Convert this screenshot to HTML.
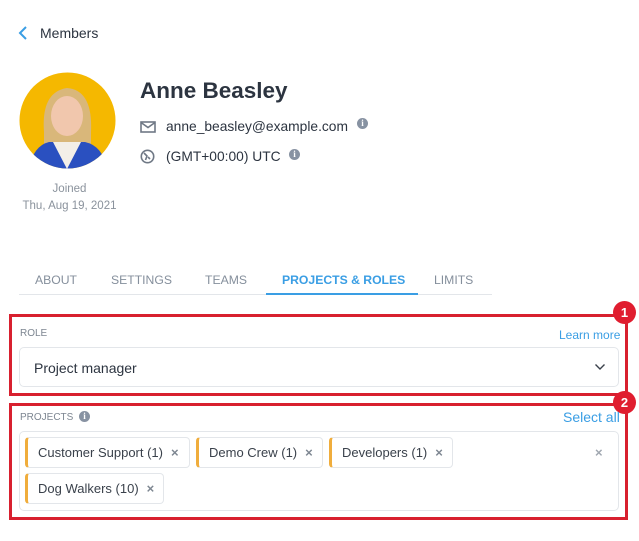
<!DOCTYPE html>
<html><head><meta charset="utf-8"><style>
*{box-sizing:border-box;margin:0;padding:0}
body{width:639px;height:541px;background:#fff;font-family:"Liberation Sans",sans-serif;color:#2c3440;position:relative;overflow:hidden}
.a{position:absolute;white-space:nowrap}
.info{position:absolute;width:11px;height:11px;border-radius:50%;background:#8792a2;color:#fff;font-size:9px;font-weight:bold;text-align:center;line-height:11px;font-family:"Liberation Serif",serif}
.tab{position:absolute;top:273px;font-size:12.2px;color:#858f9c}
.chip{position:absolute;height:31px;border:1px solid #e3e6ea;border-left:3px solid #f0ad3c;border-radius:4px;font-size:13px;color:#3a414b;line-height:29px;padding-left:10px}
.chip span{color:#7d8691;margin-left:8px;font-size:13px;font-weight:bold}
.badge{position:absolute;width:23px;height:23px;border-radius:50%;background:#e01d2f;color:#fff;font-size:13px;font-weight:bold;text-align:center;line-height:23px}
.rbox{position:absolute;border:3px solid #d8202f}
</style></head><body>
<svg class="a" style="left:17px;top:25px" width="12" height="16" viewBox="0 0 12 16"><path d="M9 2 L3 8 L9 14" fill="none" stroke="#3a9ee4" stroke-width="2"/></svg>
<div class="a" style="left:40px;top:25px;font-size:14px;color:#2c3440">Members</div>

<svg class="a" style="left:19px;top:72px" width="97" height="97" viewBox="0 0 97 97">
<defs><clipPath id="c"><circle cx="48.5" cy="48.5" r="48"/></clipPath></defs>
<g clip-path="url(#c)">
<rect width="97" height="97" fill="#f5b800"/>
<path d="M25 60 Q22 20 48 16 Q74 18 72 60 L72 80 L25 80Z" fill="#d9b77a"/>
<ellipse cx="48" cy="44" rx="16" ry="20" fill="#f1c7ad"/>
<path d="M10 97 Q14 74 30 70 L66 70 Q84 74 88 97Z" fill="#2a50c0"/>
<path d="M34 70 L48 97 L62 70Z" fill="#f3efe8"/>
</g></svg>
<div class="a" style="left:0;width:139px;top:181px;text-align:center;font-size:11.5px;color:#8a929c;line-height:17px">Joined<br>Thu, Aug 19, 2021</div>

<div class="a" style="left:140px;top:78px;font-size:22.5px;font-weight:bold;color:#2c3440">Anne Beasley</div>
<svg class="a" style="left:140px;top:121px" width="16" height="12" viewBox="0 0 16 12"><rect x="1" y="1" width="14" height="10" fill="none" stroke="#6f7885" stroke-width="1.6"/><path d="M1 1.5 L8 6.5 L15 1.5" fill="none" stroke="#6f7885" stroke-width="1.6"/></svg>
<div class="a" style="left:166px;top:119px;font-size:13.8px;color:#2c3440">anne_beasley@example.com</div>
<div class="info" style="left:357px;top:118px">i</div>
<svg class="a" style="left:140px;top:149px" width="15" height="15" viewBox="0 0 15 15"><circle cx="7.5" cy="7.5" r="6.2" fill="none" stroke="#6f7885" stroke-width="1.6"/><path d="M4 4 L7 7 L5.5 11 M10 10 L8 8" stroke="#6f7885" stroke-width="1.6" fill="none"/></svg>
<div class="a" style="left:166px;top:149px;font-size:13.8px;color:#2c3440">(GMT+00:00) UTC</div>
<div class="info" style="left:289px;top:149px">i</div>

<div class="tab" style="left:35px">ABOUT</div>
<div class="tab" style="left:111px">SETTINGS</div>
<div class="tab" style="left:205px">TEAMS</div>
<div class="tab" style="left:282px;color:#3a9ee4;font-weight:bold">PROJECTS &amp; ROLES</div>
<div class="tab" style="left:434px">LIMITS</div>
<div class="a" style="left:19px;top:294px;width:473px;height:1px;background:#e3e6ea"></div>
<div class="a" style="left:266px;top:293px;width:152px;height:2px;background:#3a9ee4"></div>

<div class="rbox" style="left:9px;top:314px;width:619px;height:82px"></div>
<div class="badge" style="left:613px;top:301px">1</div>
<div class="a" style="left:20px;top:328px;font-size:10px;color:#7d8691">ROLE</div>
<div class="a" style="left:559px;top:328px;font-size:12px;color:#3a9ee4">Learn more</div>
<div class="a" style="left:19px;top:347px;width:600px;height:40px;border:1px solid #e3e6ea;border-radius:5px"></div>
<div class="a" style="left:34px;top:360px;font-size:14px;color:#2c3440">Project manager</div>
<svg class="a" style="left:594px;top:363px" width="12" height="8" viewBox="0 0 12 8"><path d="M1.5 1.5 L6 6 L10.5 1.5" fill="none" stroke="#3a414b" stroke-width="1.4"/></svg>

<div class="rbox" style="left:9px;top:403px;width:619px;height:117px"></div>
<div class="badge" style="left:613px;top:391px">2</div>
<div class="a" style="left:20px;top:412px;font-size:10px;color:#7d8691">PROJECTS</div>
<div class="info" style="left:79px;top:411px">i</div>
<div class="a" style="left:563px;top:409px;font-size:14px;color:#3a9ee4">Select all</div>
<div class="a" style="left:19px;top:431px;width:600px;height:80px;border:1px solid #e3e6ea;border-radius:5px"></div>
<div class="chip" style="left:25px;top:437px;width:165px">Customer Support (1)<span>×</span></div>
<div class="chip" style="left:196px;top:437px;width:127px">Demo Crew (1)<span>×</span></div>
<div class="chip" style="left:329px;top:437px;width:124px">Developers (1)<span>×</span></div>
<div class="chip" style="left:25px;top:473px;width:139px">Dog Walkers (10)<span>×</span></div>
<div class="a" style="left:595px;top:445px;font-size:13px;color:#a0a7b0;font-weight:bold">×</div>
</body></html>
